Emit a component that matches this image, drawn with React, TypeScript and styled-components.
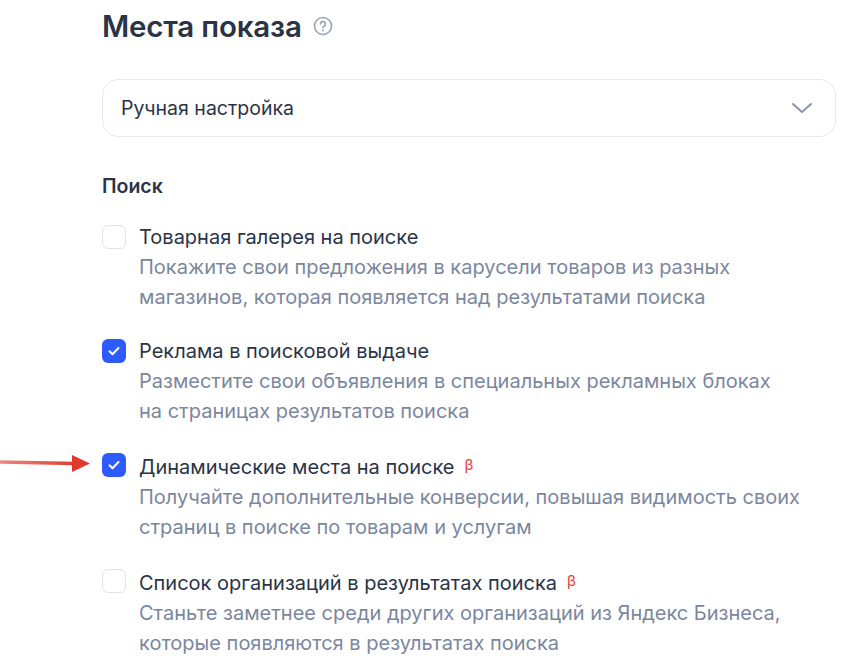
import React from "react";
import styled, { createGlobalStyle } from "styled-components";

const Global = createGlobalStyle`
  body { margin: 0; background: #fff; font-family: Inter, "Noto Sans", sans-serif; color: #2b3447; }
`;

const Page = styled.div`
  position: relative;
  width: 868px;
  height: 659px;
  overflow: hidden;
  padding: 7px 32px 0 102px;
  box-sizing: border-box;
`;

const Title = styled.h1`
  margin: 0;
  font-size: 29.5px;
  font-weight: 600;
  line-height: 38px;
  letter-spacing: -0.2px;
  color: #2b3447;
  display: flex;
  align-items: center;
  gap: 11px;
`;

const Select = styled.div`
  margin-top: 34px;
  height: 56px;
  border: 1px solid #e6e9f0;
  border-radius: 16px;
  display: flex;
  align-items: center;
  justify-content: space-between;
  padding: 0 22px 0 18px;
  font-size: 19.5px;
  color: #2b3447;
`;

const Section = styled.div`
  margin-top: 37px;
  font-size: 19.5px;
  font-weight: 600;
  line-height: 24px;
`;

const List = styled.div`
  margin-top: 24px;
  display: flex;
  flex-direction: column;
  gap: 24px;
`;

const Item = styled.div`
  display: grid;
  grid-template-columns: 24px 1fr;
  column-gap: 13px;
`;

const Box = styled.div<{ $on?: boolean }>`
  width: 24px;
  height: 24px;
  margin-top: 3px;
  box-sizing: border-box;
  border-radius: 6px;
  background: ${(p) => (p.$on ? "#2e5bff" : "#fff")};
  border: ${(p) => (p.$on ? "none" : "1.5px solid #dfe3ea")};
  display: flex;
  align-items: center;
  justify-content: center;
`;

const ItemTitle = styled.div`
  font-size: 20px;
  line-height: 30px;
  color: #2b3447;
`;

const Beta = styled.span`
  color: #f0383c;
  font-size: 15px;
  margin-left: 10px;
  vertical-align: 4px;
`;

const Desc = styled.div`
  grid-column: 2;
  font-size: 20px;
  line-height: 30px;
  color: #7b879e;
`;

const Arrow = styled.svg`
  position: absolute;
  left: 0;
  top: 452px;
`;

const Check = () => (
  <svg width="14" height="14" viewBox="0 0 14 14">
    <path d="M2.5 7.2l3 3 6-6.2" fill="none" stroke="#fff" strokeWidth="2" strokeLinecap="round" strokeLinejoin="round" />
  </svg>
);

const items = [
  { on: false, beta: false, t: "Товарная галерея на поиске", d: ["Покажите свои предложения в карусели товаров из разных", "магазинов, которая появляется над результатами поиска"] },
  { on: true, beta: false, t: "Реклама в поисковой выдаче", d: ["Разместите свои объявления в специальных рекламных блоках", "на страницах результатов поиска"] },
  { on: true, beta: true, t: "Динамические места на поиске", d: ["Получайте дополнительные конверсии, повышая видимость своих", "страниц в поиске по товарам и услугам"] },
  { on: false, beta: true, t: "Список организаций в результатах поиска", d: ["Станьте заметнее среди других организаций из Яндекс Бизнеса,", "которые появляются в результатах поиска"] },
];

export default function App() {
  return (
    <Page>
      <Global />
      <Title>
        Места показа
        <svg width="20" height="20" viewBox="0 0 20 20">
          <circle cx="10" cy="10" r="8.5" fill="none" stroke="#9aa3b5" strokeWidth="1.6" />
          <path d="M7.6 8a2.4 2.4 0 1 1 3.4 2.2c-.7.4-1 .8-1 1.6" fill="none" stroke="#9aa3b5" strokeWidth="1.6" strokeLinecap="round" />
          <circle cx="10" cy="14.3" r="1" fill="#9aa3b5" />
        </svg>
      </Title>
      <Select>
        Ручная настройка
        <svg width="22" height="14" viewBox="0 0 22 14">
          <path d="M2 3l9 8 9-8" fill="none" stroke="#8a94a8" strokeWidth="2" strokeLinecap="round" strokeLinejoin="round" />
        </svg>
      </Select>
      <Section>Поиск</Section>
      <List>
        {items.map((it) => (
          <Item key={it.t}>
            <Box $on={it.on}>{it.on && <Check />}</Box>
            <ItemTitle>
              {it.t}
              {it.beta && <Beta>β</Beta>}
            </ItemTitle>
            <Desc>{it.d.map((l) => <div key={l}>{l}</div>)}</Desc>
          </Item>
        ))}
      </List>
      <Arrow width="92" height="22" viewBox="0 0 92 22">
        <defs>
          <linearGradient id="ag" x1="0" x2="1">
            <stop offset="0" stopColor="#e03a2e" stopOpacity="0.6" />
            <stop offset="1" stopColor="#e03a2e" />
          </linearGradient>
        </defs>
        <path d="M0 10L76 11.5" stroke="url(#ag)" strokeWidth="3.5" />
        <path d="M72 3L90 11.5 72 20z" fill="#e03a2e" />
      </Arrow>
    </Page>
  );
}
